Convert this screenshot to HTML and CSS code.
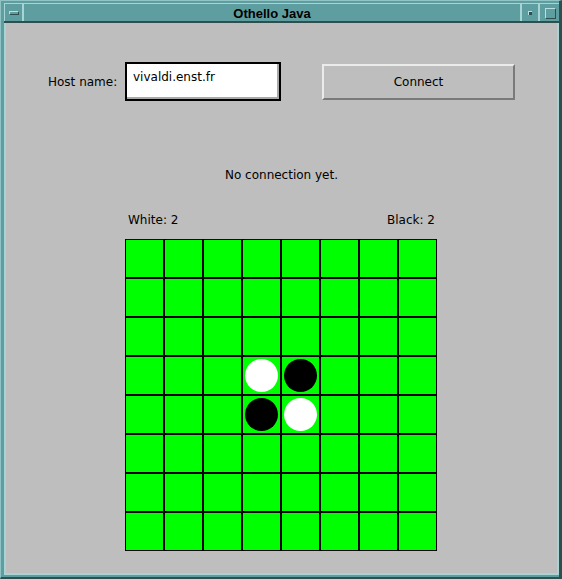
FILE: index.html
```html
<!DOCTYPE html>
<html>
<head>
<meta charset="utf-8">
<title>Othello Java</title>
<link rel="stylesheet" href="styles.css">
</head>
<body>
<div class="window">
  <div class="titlebar">
    <div class="tb-menu"><span class="menu-bar"></span></div>
    <div class="tb-title">Othello Java</div>
    <div class="tb-min"><span class="min-dot"></span></div>
    <div class="tb-max"><span class="max-box"></span></div>
  </div>
  <div class="client">
    <div class="connect-row">
      <span class="label">Host name:</span>
      <div class="field">vivaldi.enst.fr</div>
      <div class="button">Connect</div>
    </div>
    <div class="status">No connection yet.</div>
    <div class="scores">
      <span>White: 2</span>
      <span>Black: 2</span>
    </div>
    <div class="board">
      <div class="cell"></div><div class="cell"></div><div class="cell"></div><div class="cell"></div><div class="cell"></div><div class="cell"></div><div class="cell"></div><div class="cell"></div>
      <div class="cell"></div><div class="cell"></div><div class="cell"></div><div class="cell"></div><div class="cell"></div><div class="cell"></div><div class="cell"></div><div class="cell"></div>
      <div class="cell"></div><div class="cell"></div><div class="cell"></div><div class="cell"></div><div class="cell"></div><div class="cell"></div><div class="cell"></div><div class="cell"></div>
      <div class="cell"></div><div class="cell"></div><div class="cell"></div><div class="cell"><span class="stone white"></span></div><div class="cell"><span class="stone black"></span></div><div class="cell"></div><div class="cell"></div><div class="cell"></div>
      <div class="cell"></div><div class="cell"></div><div class="cell"></div><div class="cell"><span class="stone black"></span></div><div class="cell"><span class="stone white"></span></div><div class="cell"></div><div class="cell"></div><div class="cell"></div>
      <div class="cell"></div><div class="cell"></div><div class="cell"></div><div class="cell"></div><div class="cell"></div><div class="cell"></div><div class="cell"></div><div class="cell"></div>
      <div class="cell"></div><div class="cell"></div><div class="cell"></div><div class="cell"></div><div class="cell"></div><div class="cell"></div><div class="cell"></div><div class="cell"></div>
      <div class="cell"></div><div class="cell"></div><div class="cell"></div><div class="cell"></div><div class="cell"></div><div class="cell"></div><div class="cell"></div><div class="cell"></div>
    </div>
  </div>
</div>
</body>
</html>
```

FILE: styles.css
```css
* { box-sizing: border-box; }

html, body {
  margin: 0;
  padding: 0;
  background: #5f9ea0;
}

.window {
  width: 562px;
  height: 579px;
  background: #5f9ea0;
  border-top: 1px solid #8fc3c4;
  border-left: 1px solid #8fc3c4;
  border-right: 3px solid #2f4f4f;
  border-bottom: 2px solid #2f4f4f;
  padding: 2px 0 2px 3px;
  display: flex;
  flex-direction: column;
}

.titlebar {
  height: 20px;
  display: flex;
  border-top: 1px solid #a8d4d5;
  border-bottom: 2px solid #2f4f4f;
  background: #5f9ea0;
}

.tb-menu {
  width: 18px;
  border-left: 1px solid #a8d4d5;
  display: flex;
  align-items: center;
  justify-content: center;
}

.menu-bar {
  display: block;
  width: 10px;
  height: 4px;
  border-top: 1px solid #b8e0e0;
  border-left: 1px solid #b8e0e0;
  border-right: 1px solid #2f4f4f;
  border-bottom: 1px solid #2f4f4f;
  margin-left: 1px;
  margin-top: 1px;
}

.tb-title {
  width: 500px;
  border-left: 2px solid #a8d4d5;
  border-right: 2px solid #a8d4d5;
  text-align: center;
  font-family: "Liberation Sans", Arial, sans-serif;
  font-weight: bold;
  font-size: 13px;
  line-height: 17px;
  padding-top: 1px;
  color: #000;
}

.tb-min {
  width: 16px;
  display: flex;
  align-items: center;
  justify-content: center;
}

.min-dot {
  display: block;
  width: 4px;
  height: 4px;
  border-top: 1px solid #b8e0e0;
  border-left: 1px solid #b8e0e0;
  background: #2f4f4f;
  margin-top: 1px;
}

.tb-max {
  width: 21px;
  border-left: 2px solid #a8d4d5;
  display: flex;
  align-items: center;
  justify-content: center;
}

.max-box {
  display: block;
  width: 11px;
  height: 11px;
  border-top: 1px solid #b8e0e0;
  border-left: 1px solid #b8e0e0;
  border-right: 1px solid #2f4f4f;
  border-bottom: 1px solid #2f4f4f;
  margin-left: 1px;
  margin-top: 1px;
}

.client {
  width: 555px;
  height: 552px;
  background: #bebebe;
  border-left: 2px solid #a8d4d5;
  border-right: 2px solid #a8d4d5;
  border-bottom: 2px solid #a8d4d5;
  font-family: "DejaVu Sans", Verdana, sans-serif;
  font-size: 12px;
  color: #000;
  display: flex;
  flex-direction: column;
}

.connect-row {
  display: flex;
  align-items: center;
  padding-top: 39px;
  padding-left: 42px;
  height: 78px;
}

.label {
  line-height: 14px;
  width: 77px;
}

.field {
  width: 156px;
  height: 39px;
  background: #fff;
  border: 2px solid #000;
  box-shadow: inset -2px -2px 0 #a9a9a9;
  padding: 6px 0 0 6px;
  line-height: 15px;
}

.button {
  margin-left: 41px;
  width: 193px;
  height: 36px;
  border-top: 2px solid #ebebeb;
  border-left: 2px solid #ebebeb;
  border-right: 2px solid #7a7a7a;
  border-bottom: 2px solid #7a7a7a;
  display: flex;
  align-items: center;
  justify-content: center;
  line-height: 14px;
  padding-top: 1px;
}

.status {
  margin-top: 67px;
  text-align: center;
  line-height: 14px;
}

.scores {
  margin-top: 31px;
  margin-left: 119px;
  width: 312px;
  display: flex;
  justify-content: space-between;
  padding: 0 2px 0 3px;
  line-height: 14px;
}

.board {
  margin-top: 12px;
  margin-left: 119px;
  display: grid;
  grid-template-columns: repeat(8, 39px);
  grid-template-rows: repeat(8, 39px);
  width: 312px;
  height: 312px;
}

.cell {
  background: #00ff00;
  border: 1px solid #000;
  display: flex;
  align-items: center;
  justify-content: center;
}

.stone {
  display: block;
  width: 33px;
  height: 33px;
  border-radius: 50%;
}

.stone.white { background: #fff; }
.stone.black { background: #000; }
```
